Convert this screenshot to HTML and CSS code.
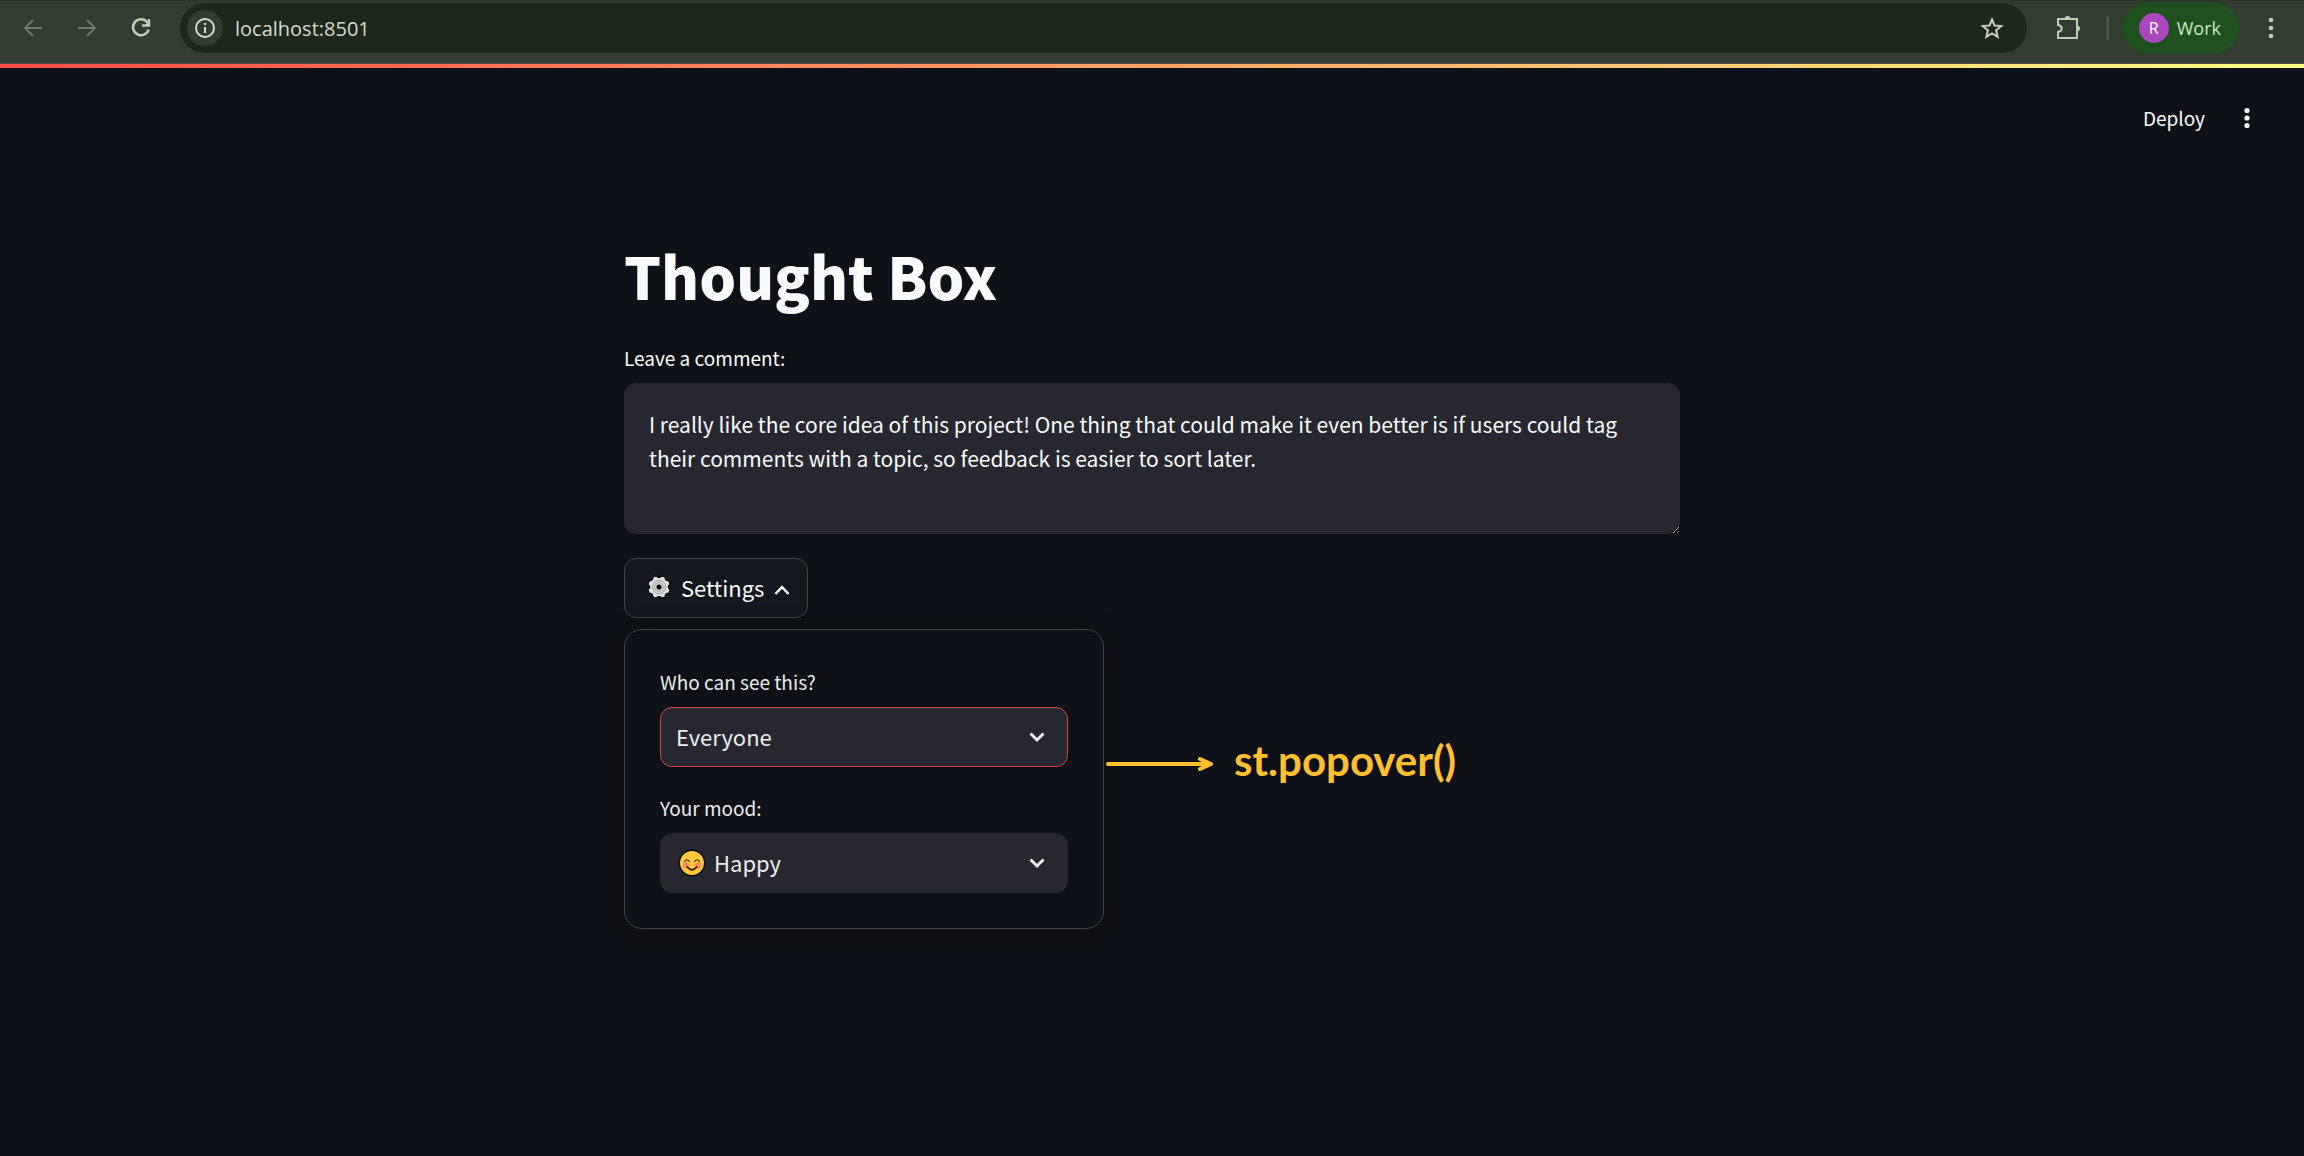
FILE: index.html
```html
<!DOCTYPE html>
<html lang="en">
<head>
<meta charset="utf-8">
<meta name="viewport" content="width=device-width, initial-scale=1">
<title>Thought Box</title>
<link rel="stylesheet" href="styles.css">
</head>
<body>
<header class="browser">
  <div class="browser-nav">
    <button class="icon-button dim" type="button" aria-label="Back"><svg width="24" height="24" viewBox="0 0 24 24"><path d="M21 12H4M12 4l-8 8 8 8"/></svg></button>
    <button class="icon-button dim" type="button" aria-label="Forward"><svg width="24" height="24" viewBox="0 0 24 24"><path d="M3 12h17M12 4l8 8-8 8"/></svg></button>
    <button class="icon-button" type="button" aria-label="Reload"><svg width="24" height="24" viewBox="0 0 24 24"><path class="bold" d="M18.500 6.500A8 8 0 1 0 19.700 13.500M20 3v6.500h-7"/><path class="solid" d="M20 5v4h-4z"/></svg></button>
  </div>
  <div class="address">
    <button class="site-info" type="button" aria-label="Site information"><svg width="24" height="24" viewBox="0 0 24 24"><circle cx="12" cy="12" r="9"/><path d="M12 11v6M12 7v2"/></svg></button>
    <input class="address-input" type="text" value="localhost:8501" aria-label="Address">
    <button class="icon-button star" type="button" aria-label="Bookmark"><svg width="26" height="26" viewBox="0 0 26 26"><path d="M13 4.500l2.500 6 6.700.5-5.100 4.300 1.600 6.600L13 18.400l-5.700 3.500 1.600-6.600L3.800 11l6.700-.5z"/></svg></button>
  </div>
  <button class="icon-button" type="button" aria-label="Extensions"><svg width="28" height="28" viewBox="0 0 28 28"><path d="M4 5h19v19H4v-6c5-1 5-6 0-7z"/><path class="solid" d="M10.500 5a3 3 0 0 1 6 0zM23 11.500a3 3 0 0 1 0 6z"/></svg></button>
  <span class="divider"></span>
  <button class="profile" type="button"><span class="avatar">R</span>Work</button>
  <button class="icon-button" type="button" aria-label="Browser menu"><svg width="10" height="24" viewBox="0 0 10 24"><g class="solid"><circle cx="5" cy="4" r="2.300"/><circle cx="5" cy="12" r="2.300"/><circle cx="5" cy="20" r="2.300"/></g></svg></button>
</header>
<div class="decoration"></div>
<div class="toolbar">
  <button class="deploy" type="button">Deploy</button>
  <button class="icon-button menu" type="button" aria-label="Main menu"><svg width="10" height="24" viewBox="0 0 10 24"><g class="solid"><circle cx="5" cy="4.500" r="2.600"/><circle cx="5" cy="12" r="2.600"/><circle cx="5" cy="19.500" r="2.600"/></g></svg></button>
</div>
<main class="content">
  <h1>Thought Box</h1>
  <label class="label" for="comment">Leave a comment:</label>
  <textarea class="comment" id="comment">I really like the core idea of this project! One thing that could make it even better is if users could tag their comments with a topic, so feedback is easier to sort later.</textarea>
  <button class="settings" type="button" aria-expanded="true">
    <svg class="gear" width="26" height="26" viewBox="0 0 26 26"><path d="M10.500 2l1.500 1.500h2L15.500 2l3.500 1 .5 2.500 1 1 2.500.5 1 3.500-1.500 1.500v2l1.500 1.500-1 3.500-2.500.5-1 1-.5 2.500-3.500 1-1.500-1.500h-2L10.500 24 7 23l-.5-2.500-1-1L3 19l-1-3.500L3.500 14v-2L2 10.500 3 7l2.500-.5 1-1L7 3z" fill="#e2e2e2" stroke="#08090b" stroke-width="1.200"/><circle cx="13" cy="13" r="6.800" fill="#cfcfcf" stroke="#a5a5a5" stroke-width="1"/><circle cx="13" cy="13" r="4.300" fill="none" stroke="#aeaeae"/><circle cx="13" cy="13" r="2.500" fill="#08090b"/></svg>
    <span>Settings</span>
    <svg class="chevron thin" width="18" height="18" viewBox="0 0 18 18"><path d="M2.500 14l6.500-7 6.500 7"/></svg>
  </button>
  <div class="popover-row">
    <section class="popover" aria-label="Settings">
      <div class="field">
        <label class="label" for="audience">Who can see this?</label>
        <div class="select-box focused">
          <select id="audience"><option>Everyone</option></select>
          <svg class="chevron" width="18" height="18" viewBox="0 0 18 18"><path d="M2.500 5.500L9 12l6.500-6.500"/></svg>
        </div>
      </div>
      <div class="field">
        <label class="label" for="mood">Your mood:</label>
        <div class="select-box with-emoji">
          <svg class="emoji" width="28" height="28" viewBox="0 0 28 28"><circle cx="14" cy="14" r="12.700" fill="#ffc83d" stroke="#0c0c0e" stroke-width="1.500"/><circle cx="8" cy="16.500" r="3.200" fill="#ff8b57"/><circle cx="20" cy="16.500" r="3.200" fill="#ff8b57"/><path d="M6.500 12.500q2.500-3.200 5 0M16.500 12.500q2.500-3.200 5 0" fill="none" stroke="#593b20" stroke-width="1.300" stroke-linecap="round"/><path d="M9 17.800q5 6 10 0" fill="none" stroke="#2c1b12" stroke-width="1.700" stroke-linecap="round"/></svg>
          <select id="mood"><option>Happy</option></select>
          <svg class="chevron" width="18" height="18" viewBox="0 0 18 18"><path d="M2.500 5.500L9 12l6.500-6.500"/></svg>
        </div>
      </div>
    </section>
    <div class="note">
      <svg class="arrow" width="108" height="20" viewBox="0 0 108 20"><path d="M2 10h103M94 5l11 5-11 5"/></svg>
      <span>st.popover()</span>
    </div>
  </div>
</main>
</body>
</html>
```
FILE: styles.css
```css
* { box-sizing: border-box; }

body {
  margin: 0;
  min-height: 100vh;
  background: #0e1117;
  color: #fafafa;
  font-family: "Noto Sans CJK SC", "Noto Sans", sans-serif;
}

button, input, select, textarea { font: inherit; color: inherit; }
button { margin: 0; padding: 0; border: 0; background: none; }
svg { display: block; flex: none; }

/* Browser bar */
.browser {
  display: flex;
  align-items: center;
  height: 64px;
  padding: 0 28px 8px 21px;
  background: #313d2e;
  border-top: 1px solid #293426;
  border-bottom: 1px solid #4b4d48;
  color: #b9d0b2;
  font-family: "Open Sans", sans-serif;
}
.browser-nav { display: flex; gap: 30px; margin-right: 27px; }
.icon-button { display: flex; flex: none; align-items: center; justify-content: center; }
.icon-button svg, .site-info svg {
  fill: none;
  stroke: currentColor;
  stroke-width: 2;
}
.icon-button .bold { stroke-width: 2.5; }
.icon-button .solid { fill: currentColor; stroke: none; }
.browser-nav .icon-button { width: 24px; }
.dim { color: #6d7b68; }

.address {
  display: flex;
  flex: 1;
  align-items: center;
  height: 50px;
  margin-right: 27px;
  padding: 0 22px 0 7px;
  border-radius: 25px;
  background: #1c2819;
}
.site-info {
  display: flex;
  align-items: center;
  justify-content: center;
  width: 36px;
  height: 36px;
  border-radius: 50%;
  background: #313d2e;
  color: #d5dbd1;
}
.address-input {
  flex: 1;
  min-width: 0;
  margin-left: 12px;
  padding: 0;
  border: 0;
  outline: 0;
  background: none;
  color: #d5dbd1;
  font-size: 20px;
}
.star { color: #c9cec6; }
.divider { width: 3px; height: 24px; margin: 0 14px 0 24px; border-radius: 2px; background: #465643; }
.profile {
  display: flex;
  align-items: center;
  gap: 8px;
  height: 50px;
  margin-right: 27px;
  padding: 0 18px 0 16px;
  border-radius: 25px;
  background: #1e511f;
  color: #c9e7c2;
  font-size: 18px;
}
.avatar {
  width: 30px;
  border-radius: 50%;
  background: #ab47bc;
  color: #fff;
  font-size: 16px;
  line-height: 30px;
  text-align: center;
}

/* App header */
.decoration { height: 4px; background: linear-gradient(90deg, #ff4b4b, #fffd80); }
.toolbar {
  display: flex;
  align-items: center;
  justify-content: flex-end;
  gap: 37px;
  height: 100px;
  padding-right: 52px;
}
.deploy { padding-bottom: 2px; font-size: 19px; }

/* App content */
.content {
  display: flex;
  flex-direction: column;
  align-items: flex-start;
  max-width: 1104px;
  margin: 0 auto;
  padding: 67px 24px 96px;
}
h1 { margin: 0 0 26px; font-size: 58px; font-weight: 900; line-height: 80px; }
.label { display: block; margin-bottom: 8px; font-size: 19px; line-height: 34px; }
.comment {
  width: 100%;
  height: 151px;
  margin-bottom: 24px;
  padding: 24px 25px;
  border: 0;
  border-radius: 12px;
  outline: 0;
  background: #262730;
  font-size: 21px;
  line-height: 34px;
  resize: vertical;
}
.settings {
  display: flex;
  align-items: center;
  height: 60px;
  margin-bottom: 11px;
  padding: 0 16px 2px 21px;
  border: 1px solid #41444c;
  border-radius: 12px;
  background: #131720;
  font-size: 22px;
}
.settings span { margin: 0 9px; }
.chevron { fill: none; stroke: currentColor; stroke-width: 3; }
.thin { margin-top: 4px; stroke-width: 2.5; }

.popover-row { display: flex; align-items: center; }
.popover {
  display: grid;
  flex: none;
  gap: 24px;
  width: 480px;
  padding: 35px;
  border: 1px solid #41444c;
  border-radius: 18px;
  background: #0e1117;
  box-shadow: 0 6px 24px rgba(16, 16, 16, 0.9);
  color: #ececee;
}
.select-box {
  display: flex;
  align-items: center;
  height: 60px;
  padding: 0 21px 0 15px;
  border: 1px solid #262730;
  border-radius: 12px;
  background: #262730;
}
.select-box.focused { border-color: #d94346; }
.select-box select {
  flex: 1;
  height: 58px;
  padding: 0 0 3px;
  border: 0;
  outline: 0;
  appearance: none;
  background: none;
  font-size: 22px;
}
.with-emoji { gap: 8px; padding-left: 17px; }

.note {
  display: flex;
  align-items: center;
  gap: 20px;
  margin: 0 0 30px 2px;
  color: #ffbf2f;
  font-family: Lato, sans-serif;
  font-size: 42px;
  font-weight: 700;
  line-height: 48px;
}
.note span { padding-bottom: 8px; }
.arrow { fill: none; stroke: currentColor; stroke-width: 4; stroke-linecap: round; stroke-linejoin: round; }
```
